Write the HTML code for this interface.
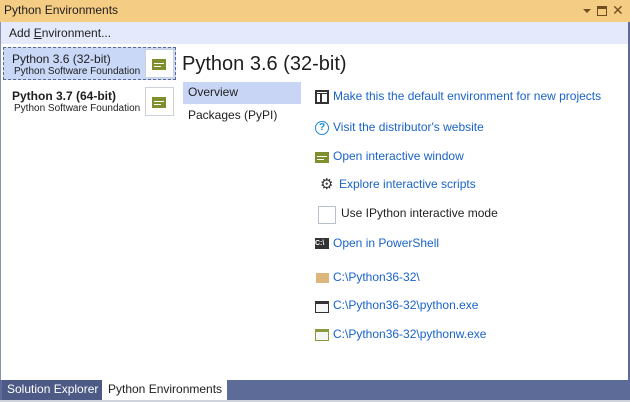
<!DOCTYPE html>
<html><head><style>
*{margin:0;padding:0;box-sizing:border-box}
body{width:630px;height:402px;overflow:hidden;background:#fff;font-family:"Segoe UI","Liberation Sans",sans-serif;font-size:12px;color:#1e1e1e;position:relative}
.a{position:absolute}
.link{color:#1a63c9;white-space:nowrap}
.ib{width:29px;height:29px;border:1px solid #ccd2dc;background:#fff}
.ic{width:14px;height:11px;background:#7f8f2e;}
.ic i{position:absolute;left:2px;width:10px;height:1px;background:#fff}
</style></head><body>
<div class="a" style="left:0;top:0;width:630px;height:22px;background:#f5cc84"></div>
<div class="a" style="left:4px;top:3px;font-size:12px">Python Environments</div>
<div class="a" style="left:583px;top:9px;width:0;height:0;border-left:4px solid transparent;border-right:4px solid transparent;border-top:4px solid #6f4d1e"></div>
<div class="a" style="left:597px;top:6px;width:10px;height:10px;border:1.5px solid #6f4d1e;border-top-width:3px"></div>
<div class="a" style="left:612px;top:2px;font-size:14px;color:#6f4d1e">✕</div>
<div class="a" style="left:0;top:22px;width:630px;height:22px;background:#e4eafb"></div>
<div class="a" style="left:9px;top:26px">Add <u>E</u>nvironment...</div>
<div class="a" style="left:628px;top:22px;width:2px;height:358px;background:#5d6b99"></div>
<div class="a" style="left:0;top:22px;width:1px;height:358px;background:#8a93ad"></div>
<div class="a" style="left:3px;top:47px;width:173px;height:33px;background:#c9d8f7;border:1px dashed #5a6a8a"></div>
<div class="a" style="left:12px;top:52px">Python 3.6 (32-bit)</div>
<div class="a" style="left:14px;top:66px;font-size:10px">Python Software Foundation</div>
<div class="a ib" style="left:145px;top:49px"></div>
<div class="a ic" style="left:152px;top:59px"><i style="top:4px"></i><i style="top:7px;width:7px"></i></div>
<div class="a" style="left:12px;top:89px;font-weight:bold">Python 3.7 (64-bit)</div>
<div class="a" style="left:14px;top:103px;font-size:10px">Python Software Foundation</div>
<div class="a ib" style="left:145px;top:87px"></div>
<div class="a ic" style="left:152px;top:97px"><i style="top:4px"></i><i style="top:7px;width:7px"></i></div>
<div class="a" style="left:182px;top:53px;font-size:20px">Python 3.6 (32-bit)</div>
<div class="a" style="left:183px;top:82px;width:118px;height:22px;background:#c8d5f5"></div>
<div class="a" style="left:188px;top:85px">Overview</div>
<div class="a" style="left:188px;top:108px">Packages (PyPI)</div>
<div class="a" style="left:315px;top:90px;width:14px;height:14px;background:#333"><i class="a" style="left:2px;top:4px;width:3px;height:8px;background:#fff"></i><i class="a" style="left:7px;top:4px;width:5px;height:8px;background:#fff"></i><i class="a" style="left:2px;top:2px;width:10px;height:1px;background:#fff"></i></div>
<div class="a link" style="left:333px;top:89px">Make this the default environment for new projects</div>
<div class="a" style="left:315px;top:121px;width:14px;height:14px;border:1.5px solid #1a8ad8;border-radius:50%;font-size:10px;font-weight:bold;color:#1a8ad8;text-align:center;line-height:11px">?</div>
<div class="a link" style="left:333px;top:120px">Visit the distributor's website</div>
<div class="a ic" style="left:315px;top:152px"><i style="top:4px"></i><i style="top:7px;width:7px"></i></div>
<div class="a link" style="left:333px;top:149px">Open interactive window</div>
<div class="a" style="left:320px;top:175px;font-size:15px;color:#333">⚙</div>
<div class="a link" style="left:339px;top:177px">Explore interactive scripts</div>
<div class="a" style="left:318px;top:206px;width:18px;height:18px;border:1px solid #b8c0cc"></div>
<div class="a" style="left:341px;top:206px">Use IPython interactive mode</div>
<div class="a" style="left:315px;top:238px;width:14px;height:11px;background:#333;color:#fff;font-size:7px;line-height:11px;font-weight:bold">C:\</div>
<div class="a link" style="left:333px;top:236px">Open in PowerShell</div>
<div class="a" style="left:316px;top:273px;width:13px;height:10px;background:#dcb67a"></div>
<div class="a link" style="left:333px;top:270px">C:\Python36-32\</div>
<div class="a" style="left:315px;top:301px;width:14px;height:12px;border:1.5px solid #333;border-top-width:3px;background:#f6f6f6"></div>
<div class="a link" style="left:333px;top:298px">C:\Python36-32\python.exe</div>
<div class="a" style="left:315px;top:329px;width:14px;height:12px;border:1.5px solid #8b9a3a;border-top-width:3px;background:#f6f6f6"></div>
<div class="a link" style="left:333px;top:327px">C:\Python36-32\pythonw.exe</div>
<div class="a" style="left:0;top:380px;width:630px;height:22px;background:#5d6b99"></div>
<div class="a" style="left:0;top:400px;width:630px;height:2px;background:#cfd3dc"></div>
<div class="a" style="left:2px;top:380px;width:100px;height:20px;background:#4d5a86"></div>
<div class="a" style="left:7px;top:382px;color:#fff">Solution Explorer</div>
<div class="a" style="left:102px;top:380px;width:125px;height:20px;background:#fff"></div>
<div class="a" style="left:108px;top:382px">Python Environments</div>
</body></html>
